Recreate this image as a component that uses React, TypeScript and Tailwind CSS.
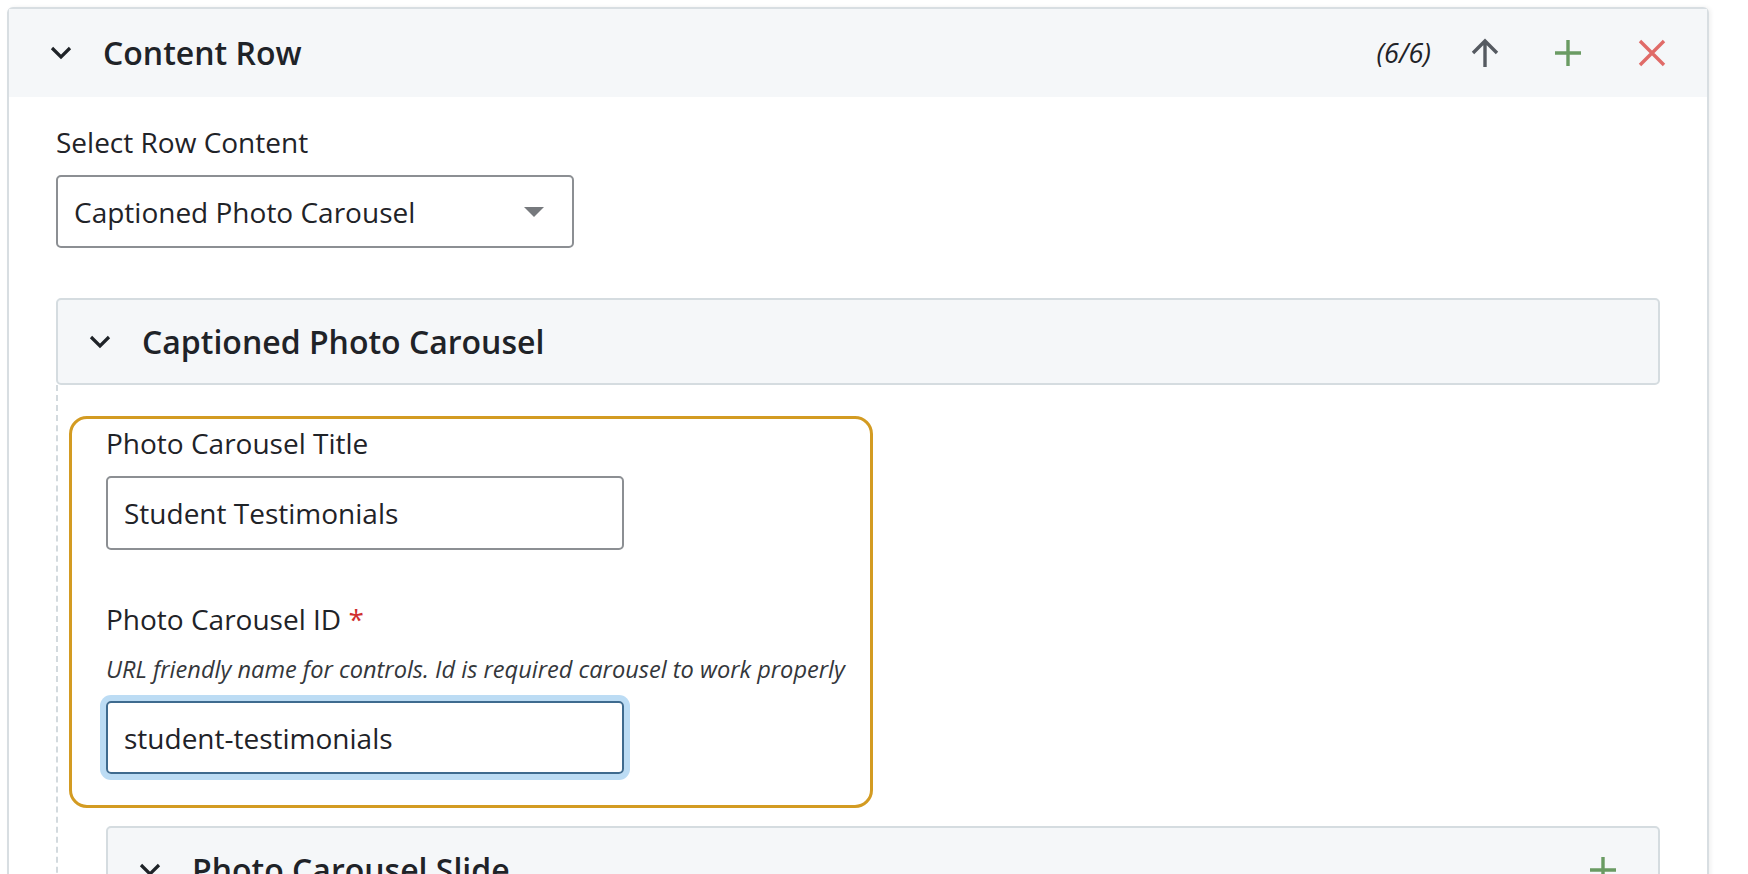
import React from 'react';

const Chevron: React.FC = () => (
    <svg width="22" height="14" viewBox="0 0 22 14" className="shrink-0">
        <path d="M2 2 L11 11 L20 2" fill="none" stroke="#1f2328" strokeWidth="3.2" />
    </svg>
);

const PlusIcon: React.FC = () => (
    <svg width="30" height="30" viewBox="0 0 30 30">
        <path d="M15 2 V28 M2 15 H28" stroke="#6a9b63" strokeWidth="3.4" />
    </svg>
);

const SectionHeader: React.FC<{ title: string; children?: React.ReactNode }> = ({ title, children }) => (
    <div className="flex items-center h-[87px] bg-[#f5f7f9] border-2 border-[#d5dce0] rounded-[5px] pl-[31px] pr-[40px]">
        <Chevron />
        <h3 className="ml-[31px] text-[32px] font-semibold text-[#1f2328]">{title}</h3>
        <div className="ml-auto flex items-center">{children}</div>
    </div>
);

const App: React.FC = () => {
    return (
        <div className="min-h-screen bg-white pt-[7px] pl-[7px] font-['Open_Sans',sans-serif] text-[#1f2328] overflow-hidden h-[874px]">
            <div className="w-[1702px] border-2 border-[#d8dee2] rounded-t-[6px] shadow-[2px_0_4px_rgba(0,0,0,0.06)] bg-white">
                {/* Top bar */}
                <div className="flex items-center h-[88px] bg-[#f5f7f9] pl-[41px] pr-[40px]">
                    <Chevron />
                    <h2 className="ml-[31px] text-[32px] font-semibold">Content Row</h2>
                    <div className="ml-auto flex items-center">
                        <span className="italic text-[27px] mr-[38px]">(6/6)</span>
                        <svg width="32" height="32" viewBox="0 0 32 32" className="mr-[52px]">
                            <path d="M16 30 V4 M4 16 L16 4 L28 16" fill="none" stroke="#555a61" strokeWidth="3.4" />
                        </svg>
                        <span className="mr-[54px]"><PlusIcon /></span>
                        <svg width="30" height="30" viewBox="0 0 30 30">
                            <path d="M3 3 L27 27 M27 3 L3 27" stroke="#e06b68" strokeWidth="3.4" />
                        </svg>
                    </div>
                </div>

                <div className="px-[47px] pt-[27px] pb-[40px]">
                    <label className="block text-[28px] leading-[36px]">Select Row Content</label>
                    <div className="mt-[15px] flex items-center justify-between w-[518px] h-[73px] border-2 border-[#8c8f93] rounded-[5px] pl-[16px] pr-[28px]">
                        <span className="text-[28px]">Captioned Photo Carousel</span>
                        <svg width="20" height="10" viewBox="0 0 20 10">
                            <path d="M0 0 H20 L10 10 Z" fill="#76797d" />
                        </svg>
                    </div>

                    <div className="mt-[50px]">
                        <SectionHeader title="Captioned Photo Carousel" />
                        <div className="border-l-2 border-dashed border-[#d3dade] pl-[48px] pt-[31px]">
                            {/* focused field group */}
                            <div className="-ml-[37px] w-[804px] border-[3px] border-[#d39b22] rounded-[18px] pl-[34px] pr-[6px] pt-[6px] pb-[31px]">
                                <label className="block text-[28px] leading-[36px]">Photo Carousel Title</label>
                                <div className="mt-[15px] w-[518px] h-[74px] border-2 border-[#8c8f93] rounded-[5px] flex items-center pl-[16px]">
                                    <span className="text-[28px]">Student Testimonials</span>
                                </div>

                                <label className="block mt-[51px] text-[28px] leading-[36px]">
                                    Photo Carousel ID <span className="text-[#d02e2e]">*</span>
                                </label>
                                <p className="mt-[16px] italic text-[23.6px] leading-[32px] text-[#34373b] whitespace-nowrap">
                                    URL friendly name for controls. Id is required carousel to work properly
                                </p>
                                <div className="mt-[16px] w-[518px] h-[73px] border-2 border-[#3f6b8f] rounded-[5px] ring-[6px] ring-[#bcdcf4] flex items-center pl-[16px]">
                                    <span className="text-[28px]">student-testimonials</span>
                                </div>
                            </div>

                            <div className="mt-[18px]">
                                <SectionHeader title="Photo Carousel Slide">
                                    <PlusIcon />
                                </SectionHeader>
                            </div>
                        </div>
                    </div>
                </div>
            </div>
        </div>
    );
};

export default App;
